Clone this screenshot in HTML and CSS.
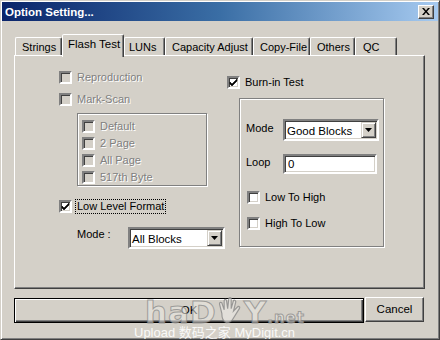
FILE: index.html
```html
<!DOCTYPE html>
<html lang="en">
<head>
    <meta charset="UTF-8">
    <title>Option Setting...</title>
    <link rel="stylesheet" href="styles.css">
</head>
<body>
    <div class="window">
        <div class="titlebar">
            <span class="title">Option Setting...</span>
            <span class="close">
                <svg width="8" height="7" viewBox="0 0 8 7"><path d="M0 0h2l2 2.5 2-2.5h2l-3 3.5 3 3.5h-2l-2-2.5-2 2.5h-2l3-3.5z" fill="#000"/></svg>
            </span>
        </div>

        <div class="tabs">
            <div class="tab tab-strings">Strings</div>
            <div class="tab tab-flash active">Flash Test</div>
            <div class="tab tab-luns">LUNs</div>
            <div class="tab tab-capacity">Capacity Adjust</div>
            <div class="tab tab-copy">Copy-File</div>
            <div class="tab tab-others">Others</div>
            <div class="tab tab-qc">QC</div>
        </div>

        <div class="panel">
            <div class="col-left">
                <div class="check-row disabled"><span class="box"></span>Reproduction</div>
                <div class="check-row disabled"><span class="box"></span>Mark-Scan</div>
                <div class="group group-scan">
                    <div class="sub-row disabled"><span class="box"></span>Default</div>
                    <div class="sub-row disabled"><span class="box"></span>2 Page</div>
                    <div class="sub-row disabled"><span class="box"></span>All Page</div>
                    <div class="sub-row disabled"><span class="box"></span>517th Byte</div>
                </div>
                <div class="check-row row-format">
                    <span class="box checked"><svg width="9" height="9" viewBox="0 0 9 9"><path d="M1 4l2 2 5-5v2l-5 5-2-2z" fill="#000" stroke="#000" stroke-width="0.6"/></svg></span>
                    <span class="focus">Low Level Format</span>
                </div>
                <div class="field-row row-mode-left">
                    <span class="label label-mode">Mode :</span>
                    <div class="combo combo-left">
                        <span class="combo-text">All Blocks</span>
                        <span class="combo-btn"><svg width="7" height="4" viewBox="0 0 7 4"><path d="M0 0h7l-3.5 4z" fill="#000"/></svg></span>
                    </div>
                </div>
            </div>

            <div class="col-right">
                <div class="check-row">
                    <span class="box checked"><svg width="9" height="9" viewBox="0 0 9 9"><path d="M1 4l2 2 5-5v2l-5 5-2-2z" fill="#000" stroke="#000" stroke-width="0.6"/></svg></span>
                    Burn-in Test
                </div>
                <div class="group group-burn">
                    <div class="field-row">
                        <span class="label label-burn">Mode</span>
                        <div class="combo combo-right">
                            <span class="combo-text">Good Blocks</span>
                            <span class="combo-btn"><svg width="7" height="4" viewBox="0 0 7 4"><path d="M0 0h7l-3.5 4z" fill="#000"/></svg></span>
                        </div>
                    </div>
                    <div class="field-row row-loop">
                        <span class="label label-burn">Loop</span>
                        <div class="edit">0</div>
                    </div>
                    <div class="check-row row-low"><span class="box"></span>Low To High</div>
                    <div class="check-row row-high"><span class="box"></span>High To Low</div>
                </div>
            </div>
        </div>

        <div class="buttons">
            <div class="btn btn-ok">OK</div>
            <div class="btn btn-cancel">Cancel</div>
        </div>

        <div class="watermark">
            <span class="wm-logo">haD<svg class="wm-hand" width="26" height="28" viewBox="0 0 22 24"><path d="M4 14 L2 6 Q2 4 4 5 L6 11 L6 3 Q7 1 8 3 L9 10 L10 1 Q11 0 12 1 L12 10 L14 3 Q15 2 16 4 L14 12 L18 8 Q20 8 19 10 L14 18 Q12 22 8 22 Q4 21 4 14 Z" fill="rgba(235,233,228,0.6)" stroke="rgba(130,130,130,0.75)" stroke-width="1"/></svg>Y<small>.net</small></span>
            <span class="wm-text">Upload 数码之家 MyDigit.cn</span>
        </div>
    </div>
</body>
</html>
```

FILE: styles.css
```css
body {
    margin: 0;
    background-color: #d4d0c8;
    font-family: "Liberation Sans", Arial, "Noto Sans CJK SC", sans-serif;
    font-size: 11px;
    color: #000;
}
.window {
    position: relative;
    width: 440px;
    height: 340px;
    box-sizing: border-box;
    background-color: #d4d0c8;
    border: 1px solid;
    border-color: #d4d0c8 #404040 #404040 #d4d0c8;
    box-shadow: inset 1px 1px #fff, inset -1px -1px #808080;
    padding: 1px;
    overflow: hidden;
}
.titlebar {
    height: 19px;
    display: flex;
    align-items: center;
    justify-content: space-between;
    padding: 0 4px 0 3px;
    background: linear-gradient(to right, #0a246a 0%, #3a6ea5 50%, #a6caf0 100%);
}
.title {
    color: #fff;
    font-weight: bold;
    font-size: 11.5px;
    font-family: "Liberation Sans", Arial, sans-serif;
}
.close {
    width: 14px;
    height: 12px;
    display: flex;
    align-items: center;
    justify-content: center;
    background-color: #d4d0c8;
    border: 1px solid;
    border-color: #fff #404040 #404040 #fff;
    box-shadow: inset -1px -1px #808080;
}

/* tabs */
.tabs {
    display: flex;
    align-items: flex-end;
    height: 21px;
    margin-top: 13px;
    padding-left: 13px;
}
.tab {
    box-sizing: border-box;
    height: 18px;
    line-height: 18px;
    padding-left: 6px;
    border: 1px solid;
    border-bottom: none;
    border-color: #fff #404040 transparent #fff;
    box-shadow: inset -1px 0 #808080;
    border-radius: 2px 2px 0 0;
    white-space: nowrap;
}
.tab.active {
    position: relative;
    z-index: 1;
    height: 23px;
    line-height: 19px;
    margin-bottom: -2px;
    padding-left: 5px;
    background-color: #d4d0c8;
    font-size: 11.5px;
}
.tab-strings { width: 47px; }
.tab-flash { width: 62px; }
.tab-luns { width: 41px; padding-left: 4px; }
.tab-capacity { width: 88px; }
.tab-copy { width: 57px; }
.tab-others { width: 45px; }
.tab-qc { width: 42px; padding-left: 7px; }

/* panel */
.panel {
    display: flex;
    margin: 0 13px 0 12px;
    padding: 10px 0 0 44px;
    box-sizing: border-box;
    height: 234px;
    border: 1px solid;
    border-color: #fff #404040 #404040 #fff;
    box-shadow: inset -1px -1px #808080;
}
.col-left {
    width: 168px;
    flex-shrink: 0;
}
.col-right {
    padding-top: 5px;
}
.check-row {
    display: flex;
    align-items: center;
    height: 22px;
    white-space: nowrap;
}
.box {
    width: 9px;
    height: 9px;
    margin-right: 5px;
    flex-shrink: 0;
    display: flex;
    align-items: center;
    justify-content: center;
    background-color: #fff;
    border: 2px solid;
    border-color: #808080 #fff #fff #808080;
    box-shadow: inset 1px 1px #404040, inset -1px -1px #d4d0c8;
}
.disabled {
    color: #808080;
    text-shadow: 1px 1px 0 #fff;
}
.disabled .box {
    background-color: #d4d0c8;
}
.group {
    border: 1px solid #808080;
    box-shadow: 1px 1px 0 #fff, inset 1px 1px 0 #fff;
}
.group-scan {
    margin: 3px 0 0 18px;
    padding: 6px 0 0 4px;
    box-sizing: border-box;
    width: 130px;
    height: 73px;
}
.sub-row {
    display: flex;
    align-items: flex-start;
    height: 17px;
    line-height: 13px;
}
.row-format {
    margin-top: 9px;
}
.focus {
    outline: 1px dotted #000;
    padding: 0 1px;
    line-height: 13px;
    margin-left: -1px;
}
.field-row {
    display: flex;
    align-items: center;
}
.row-mode-left {
    margin-top: 10px;
    padding-left: 18px;
}
.label-mode {
    width: 51px;
    margin-top: -8px;
}
.combo {
    display: flex;
    align-items: center;
    justify-content: space-between;
    height: 17px;
    background-color: #fff;
    border: 2px solid;
    border-color: #808080 #fff #fff #808080;
    box-shadow: inset 1px 1px #404040, inset -1px -1px #d4d0c8;
    padding: 1px 1px 0 2px;
    font-size: 11.5px;
}
.combo-left {
    width: 90px;
}
.combo-right {
    width: 89px;
}
.combo-btn {
    width: 13px;
    height: 14px;
    margin-bottom: 1px;
    display: flex;
    align-items: center;
    justify-content: center;
    background-color: #d4d0c8;
    border: 1px solid;
    border-color: #d4d0c8 #404040 #404040 #d4d0c8;
    box-shadow: inset 1px 1px #fff, inset -1px -1px #808080;
}
.group-burn {
    width: 145px;
    height: 149px;
    box-sizing: border-box;
    margin: 5px 0 0 12px;
    padding: 20px 0 0 6px;
}
.label-burn {
    width: 37px;
    margin-top: -4px;
}
.row-loop {
    margin-top: 13px;
}
.edit {
    width: 87px;
    height: 16px;
    line-height: 17px;
    padding-left: 3px;
    background-color: #fff;
    border: 2px solid;
    border-color: #808080 #fff #fff #808080;
    box-shadow: inset 1px 1px #404040, inset -1px -1px #d4d0c8;
    font-size: 11.5px;
}
.row-low {
    margin-top: 12px;
    padding-left: 1px;
}
.row-high {
    margin-top: 4px;
    padding-left: 1px;
}

/* buttons */
.buttons {
    display: flex;
    gap: 1px;
    margin: 9px 0 0 12px;
}
.btn {
    height: 23px;
    line-height: 23px;
    text-align: center;
    border: 1px solid;
    border-color: #fff #404040 #404040 #fff;
    box-shadow: inset -1px -1px #808080;
    font-size: 11.5px;
}
.btn-ok {
    width: 348px;
    border-color: #000;
    box-shadow: inset 1px 1px #fff, inset -1px -1px #404040, inset -2px -2px #808080;
}
.btn-cancel {
    width: 57px;
    margin-top: -1px;
}

/* image watermark lying over the buttons */
.watermark {
    position: absolute;
    left: 130px;
    top: 296px;
    width: 190px;
    height: 42px;
    pointer-events: none;
}
.wm-logo {
    position: absolute;
    left: 14px;
    top: 0;
    display: flex;
    align-items: flex-end;
    font-family: "DejaVu Sans", sans-serif;
    font-weight: bold;
    font-size: 31px;
    line-height: 29px;
    letter-spacing: 1px;
    color: rgba(235, 233, 228, 0.55);
    -webkit-text-stroke: 1px rgba(130, 130, 130, 0.7);
}
.wm-hand {
    margin: 0 1px 2px 0;
}
.wm-logo small {
    font-size: 15px;
    line-height: 17px;
}
.wm-text {
    position: absolute;
    left: 3px;
    top: 25px;
    font-size: 13px;
    color: rgba(255, 255, 255, 0.9);
    white-space: nowrap;
}
```
